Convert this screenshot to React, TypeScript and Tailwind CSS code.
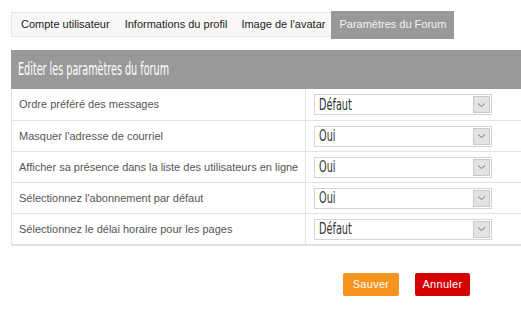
import React from "react";

const rows: { label: string; value: string }[] = [
  { label: "Ordre préféré des messages", value: "Défaut" },
  { label: "Masquer l'adresse de courriel", value: "Oui" },
  { label: "Afficher sa présence dans la liste des utilisateurs en ligne", value: "Oui" },
  { label: "Sélectionnez l'abonnement par défaut", value: "Oui" },
  { label: "Sélectionnez le délai horaire pour les pages", value: "Défaut" },
];

function Chevron() {
  return (
    <svg width="9" height="6" viewBox="0 0 9 6" fill="none">
      <path d="M1 1.5 L4.5 4.5 L8 1.5" stroke="#777" strokeWidth="1" />
    </svg>
  );
}

export default function App() {
  return (
    <div
      className="w-[521px] h-[316px] bg-white overflow-hidden"
      style={{ fontFamily: "'Liberation Sans', Arial, sans-serif" }}
    >
      <div className="pt-[12px] pl-[11px]">
        <div className="flex items-center w-[442px] h-[25px] bg-[#f8f8f8] border border-[#e6e6e6] text-[11px] text-[#222] whitespace-nowrap">
          <div className="pl-[9px] pr-[7px]">Compte utilisateur</div>
          <div className="px-[8px]">Informations du profil</div>
          <div className="px-[6px]">Image de l'avatar</div>
          <div className="ml-auto -my-[2px] h-[28px] flex items-center px-[8px] bg-[#999999] text-[#f4f4f4]">
            Paramètres du Forum
          </div>
        </div>
      </div>

      <div className="ml-[11px] mt-[13px]">
        <div className="h-[39px] bg-[#999999] flex items-center pl-[7px] overflow-hidden">
          <span
            className="inline-block text-white text-[17px] origin-left scale-x-[0.63] whitespace-nowrap"
            style={{ fontFamily: "'DejaVu Sans Condensed', 'DejaVu Sans', sans-serif" }}
          >
            Editer les paramètres du forum
          </span>
        </div>
        <div className="border-l border-b-2 border-[#e2e2e2]">
          {rows.map((r, i) => (
            <div
              key={i}
              className={`flex h-[31px] ${i > 0 ? "border-t border-[#e2e2e2]" : ""}`}
            >
              <div className="w-[294px] border-r border-[#e2e2e2] flex items-center pl-[7px] text-[11px] text-[#555] whitespace-nowrap">
                {r.label}
              </div>
              <div className="flex items-center pl-[8px]">
                <div className="w-[178px] h-[21px] border border-[#d4d4d4] bg-white flex items-center">
                  <div className="flex-1 pl-[4px] overflow-hidden">
                    <span
                      className="inline-block text-[15px] text-[#333] origin-left scale-x-[0.72] whitespace-nowrap"
                      style={{ fontFamily: "'DejaVu Sans Condensed', 'DejaVu Sans', sans-serif" }}
                    >
                      {r.value}
                    </span>
                  </div>
                  <div className="w-[17px] h-[17px] mr-[1px] bg-[#e3e3e3] border border-[#c9c9c9] flex items-center justify-center">
                    <Chevron />
                  </div>
                </div>
              </div>
            </div>
          ))}
        </div>
      </div>

      <div className="flex pl-[343px] mt-[27px] gap-[16px]">
        <div className="w-[56px] h-[23px] rounded-[2px] bg-[#f7941d] text-white text-[11px] flex items-center justify-center tracking-[0.3px]">
          Sauver
        </div>
        <div className="w-[55px] h-[23px] rounded-[2px] bg-[#d50000] text-white text-[11px] flex items-center justify-center tracking-[0.3px]">
          Annuler
        </div>
      </div>
    </div>
  );
}
